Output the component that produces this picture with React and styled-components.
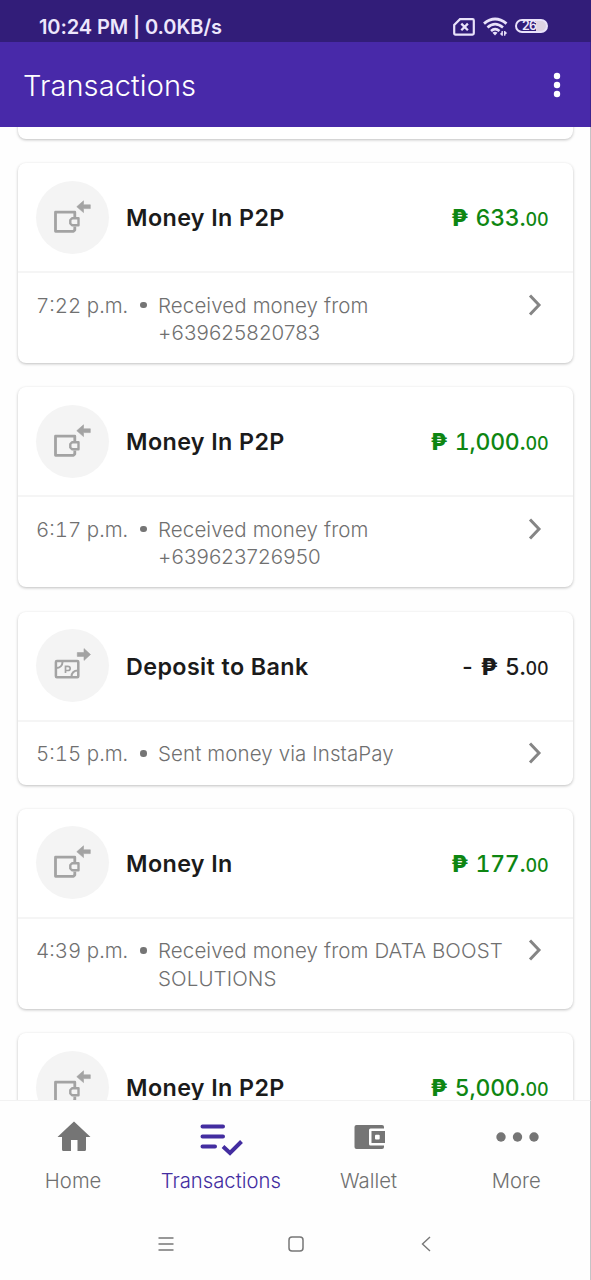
import React from 'react'
import styled, { createGlobalStyle } from 'styled-components'

const transactions = [
    { type: 'wallet', title: 'Money In P2P', whole: '633', time: '7:22 p.m.', details: ['Received money from', '+639625820783'] },
    { type: 'wallet', title: 'Money In P2P', whole: '1,000', time: '6:17 p.m.', details: ['Received money from', '+639623726950'] },
    { type: 'bank', title: 'Deposit to Bank', whole: '5', negative: true, time: '5:15 p.m.', details: ['Sent money via InstaPay'] },
    { type: 'wallet', title: 'Money In', whole: '177', time: '4:39 p.m.', details: ['Received money from DATA BOOST', 'SOLUTIONS'] },
    { type: 'wallet', title: 'Money In P2P', whole: '5,000' },
]

const WalletInIcon = () => (
    <svg width="38" height="34" viewBox="0 0 38 34" fill="none" stroke="#a3a3a3" strokeLinejoin="round">
        <path d="M21.8 17V12.2H2.5V31.3H20.5L21.8 30V26.5" strokeWidth="2.8" />
        <path d="M19 18.3H25.500V25.2H19L17.3 23.5V20Z" strokeWidth="2.4" />
        <path d="M23.8 6.7L30.5 .8V4.8H37.3V8.6H30.5V12.6Z" fill="#a3a3a3" stroke="#a3a3a3" strokeWidth=".6" />
    </svg>
)

const BankOutIcon = () => (
    <svg width="38" height="34" viewBox="0 0 38 34" fill="none" stroke="#a3a3a3">
        <rect x="2.9" y="13.1" width="22.4" height="16.2" rx="1" strokeWidth="2.5" />
        <path d="M3 20C7 20 9.500 17.500 9.500 14M25 22.500C21 22.500 18.500 25 18.500 29" strokeWidth="2" />
        <path d="M12.500 25V18.300H14.700C18 18.300 18 22.500 14.700 22.500H12.500" strokeWidth="1.700" />
        <path d="M37.500 6.500L31 .6V4.600H24.300V8.400H31V12.400Z" fill="#a3a3a3" strokeWidth=".6" strokeLinejoin="round" />
    </svg>
)

const NoSimIcon = () => (
    <svg width="22" height="18" viewBox="0 0 22 18" fill="none" stroke="#e9e2fa">
        <path d="M7 1.200H19.500Q20.800 1.200 20.800 2.500V15.300Q20.800 16.600 19.500 16.600H2.500Q1.200 16.600 1.200 15.300V7Z" strokeWidth="2.200" />
        <path d="M8.300 5.600L14.900 12.200M14.900 5.600L8.300 12.200" strokeWidth="2.300" />
    </svg>
)

const WifiIcon = () => (
    <svg width="25" height="20" viewBox="0 0 25 20" fill="none" stroke="#e9e2fa">
        <path d="M1 6.600Q12 -2.500 23.500 6.600" strokeWidth="2.900" />
        <path d="M4.500 10.500Q12 3.800 20 10.500" strokeWidth="2.700" />
        <path d="M8 14Q12 10.200 16.500 14" strokeWidth="2.500" />
        <path d="M9.500 15.800Q12 13.500 14.500 15.800L12 18.600Z" fill="#e9e2fa" stroke="none" />
        <path d="M19.200 14V18.800M21.700 14V18.800" strokeWidth="1.300" />
        <path d="M16.800 17L19.200 15V18.500ZM24.200 16L21.700 14.300V18Z" fill="#e9e2fa" stroke="none" />
    </svg>
)

const KebabIcon = () => (
    <svg width="8" height="26" viewBox="0 0 8 26" fill="#fff">
        <circle cx="4" cy="4" r="3.200" />
        <circle cx="4" cy="13" r="3.200" />
        <circle cx="4" cy="22" r="3.200" />
    </svg>
)

const ChevronIcon = () => (
    <svg width="14" height="22" viewBox="0 0 14 22" fill="none" stroke="#858585">
        <path d="M2 1.500L11 11L2 20.500" strokeWidth="3" />
    </svg>
)

const HomeIcon = () => (
    <svg width="46" height="34" viewBox="0 0 46 34" fill="#757575">
        <path d="M23 1.500L39.500 17H35V29.500Q35 31 33.500 31H26.500V20H20V31H12.500Q11 31 11 29.500V17H6.500L16 8Z" />
    </svg>
)

const ListCheckIcon = () => (
    <svg width="46" height="34" viewBox="0 0 46 34" fill="none" stroke="#432da0" overflow="visible">
        <path d="M3.500 6.500H24M3.500 16.500H24M3.500 26.500H16" strokeWidth="4" strokeLinecap="round" />
        <path d="M24 26.500L31 33L42.500 21.500" strokeWidth="4" />
    </svg>
)

const WalletIcon = () => (
    <svg width="46" height="34" viewBox="0 0 46 34">
        <path d="M10.500 5H36Q38 5 38 7V27Q38 29 36 29H10.500Q8.500 29 8.500 27V7Q8.500 5 10.500 5Z" fill="#757575" />
        <path d="M40 8.500H24.500Q23 8.500 23 10V24Q23 25.500 24.500 25.500H40Z" fill="#fff" />
        <rect x="25.500" y="11" width="13.500" height="12" fill="#757575" />
        <rect x="29" y="14.700" width="4.700" height="4.700" rx="1" fill="#fff" />
    </svg>
)

const DotsIcon = () => (
    <svg width="46" height="34" viewBox="0 0 46 34" fill="#757575">
        <circle cx="7" cy="17" r="4.700" />
        <circle cx="23.500" cy="17" r="4.700" />
        <circle cx="40" cy="17" r="4.700" />
    </svg>
)

const tabs = [
    { label: 'Home', icon: <HomeIcon /> },
    { label: 'Transactions', icon: <ListCheckIcon />, active: true },
    { label: 'Wallet', icon: <WalletIcon /> },
    { label: 'More', icon: <DotsIcon /> },
]

const TransactionItem = ({ item }) => (
    <Card>
        <CardTop>
            <IconCircle>{item.type === 'bank' ? <BankOutIcon /> : <WalletInIcon />}</IconCircle>
            <CardTitle>{item.title}</CardTitle>
            <Amount $negative={item.negative}>
                {item.negative && <Minus>-</Minus>}
                <Peso>₱</Peso>
                <span>{item.whole}.</span>
                <Cents>00</Cents>
            </Amount>
        </CardTop>
        {item.details && (
            <CardBottom>
                <Time>{item.time}</Time>
                <Bullet />
                <Details>
                    {item.details.map((line) => <div key={line}>{line}</div>)}
                </Details>
                <ChevronIcon />
            </CardBottom>
        )}
    </Card>
)

const App = () => {
    return (
        <Screen>
            <GlobalStyle />
            <StatusBar>
                <Clock>10:24 PM | 0.0KB/s</Clock>
                <StatusIcons>
                    <NoSimIcon />
                    <WifiIcon />
                    <Battery><span>26</span></Battery>
                </StatusIcons>
            </StatusBar>
            <AppBar>
                <PageTitle>Transactions</PageTitle>
                <KebabIcon />
            </AppBar>
            <List>
                <PreviousCard />
                {transactions.map((item, i) => <TransactionItem key={i} item={item} />)}
            </List>
            <TabBar>
                {tabs.map((tab) => (
                    <Tab key={tab.label} $active={tab.active}>
                        {tab.icon}
                        <span>{tab.label}</span>
                    </Tab>
                ))}
            </TabBar>
            <SystemNav>
                <svg width="16" height="16" viewBox="0 0 16 16" stroke="#777" strokeWidth="1.400">
                    <path d="M.5 2H15.500M.5 8H15.500M.5 14H15.500" />
                </svg>
                <svg width="16" height="16" viewBox="0 0 16 16" fill="none" stroke="#777" strokeWidth="1.500">
                    <rect x="1" y="1" width="14" height="14" rx="3" />
                </svg>
                <svg width="16" height="16" viewBox="0 0 16 16" fill="none" stroke="#777" strokeWidth="1.400">
                    <path d="M12 1L4.500 8L12 15" />
                </svg>
            </SystemNav>
        </Screen>
    )
}

const GlobalStyle = createGlobalStyle`
    * {
        box-sizing: border-box;
    }

    body {
        margin: 0;
        background: #fff;
        font-family: Inter, 'Noto Sans', sans-serif;
    }

    svg {
        display: block;
        flex-shrink: 0;
    }
`

const Screen = styled.div`
    width: 591px;
    height: 1280px;
    display: flex;
    flex-direction: column;
    overflow: hidden;
    background: #fefefe;
`

const StatusBar = styled.header`
    height: 42px;
    flex-shrink: 0;
    display: flex;
    justify-content: space-between;
    padding: 15px 43px 0 39px;
    background: #321d79;
    color: #ede7fc;
`

const Clock = styled.div`
    font-size: 20px;
    line-height: 24px;
    font-weight: 600;
    letter-spacing: -0.1px;
    white-space: nowrap;
`

const StatusIcons = styled.div`
    height: 24px;
    display: flex;
    align-items: center;
    gap: 7.5px;
`

const Battery = styled.div`
    width: 33px;
    height: 14px;
    margin-top: -2px;
    border: 2px solid #e9e2fa;
    border-radius: 7px;
    background: linear-gradient(to right, transparent 66%, #ddd3e2 66%);
    display: flex;
    align-items: center;
    padding-left: 5px;
    font-size: 12.5px;
    line-height: 12px;
    font-weight: 600;
    letter-spacing: -0.7px;
`

const AppBar = styled.div`
    height: 85px;
    flex-shrink: 0;
    display: flex;
    align-items: center;
    justify-content: space-between;
    padding: 1px 29px 0 23px;
    background: #4829a9;
    border-right: 1px solid #3c228e;
`

const PageTitle = styled.h1`
    margin: 0;
    padding-top: 1px;
    color: #fff;
    font-size: 29px;
    font-weight: 300;
    letter-spacing: 0.1px;
`

const List = styled.main`
    flex: 1;
    min-height: 0;
    overflow: hidden;
    display: flex;
    flex-direction: column;
    gap: 24.4px;
    padding: 0 17px 0 18px;
    border-right: 1px solid #c4c4c6;
`

const Card = styled.section`
    flex-shrink: 0;
    border-radius: 8px;
    background: #fff;
    box-shadow: 0 1px 3px rgba(0, 0, 0, 0.25);
`

const PreviousCard = styled(Card)`
    height: 30px;
    margin-top: -18.4px;
`

const CardTop = styled.div`
    height: 110px;
    display: flex;
    align-items: center;
    padding: 0 24.5px 0 18px;
    border-bottom: 2px solid #f5f5f5;
`

const IconCircle = styled.div`
    width: 73px;
    height: 73px;
    flex-shrink: 0;
    border-radius: 50%;
    background: #f4f4f4;
    padding: 19px 0 0 17px;
`

const CardTitle = styled.h2`
    flex: 1;
    margin: 1px 0 0 17px;
    color: #1b1b1b;
    font-size: 23.3px;
    font-weight: 600;
    letter-spacing: 0.4px;
    white-space: nowrap;
`

const Amount = styled.div`
    display: flex;
    align-items: baseline;
    margin-top: 2px;
    color: ${({ $negative }) => ($negative ? '#1b1b1b' : '#0e8612')};
    font-size: 23px;
    font-weight: 450;
    font-variant-numeric: tabular-nums;
    letter-spacing: -0.2px;
`

const Minus = styled.span`
    margin-right: 6px;
`

const Peso = styled.span`
    margin-right: 7.5px;
    font-weight: 800;
`

const Cents = styled.span`
    font-size: 18px;
`

const CardBottom = styled.div`
    display: flex;
    align-items: flex-start;
    padding: 18.5px 31px 17.1px 18px;
    color: #707070;
    font-size: 20.5px;
    line-height: 27.2px;
    font-weight: 300;

    > svg {
        margin-top: 2px;
    }
`

const Time = styled.div`
    width: 104px;
    white-space: nowrap;
    font-variant-numeric: tabular-nums;
`

const Bullet = styled.i`
    width: 6.5px;
    height: 6.5px;
    margin: 10px 11.5px 0 0;
    border-radius: 50%;
    background: #757575;
`

const Details = styled.div`
    flex: 1;
    white-space: nowrap;
    letter-spacing: 0.1px;
`

const TabBar = styled.nav`
    height: 108px;
    flex-shrink: 0;
    display: grid;
    grid-template-columns: repeat(4, 147.7px);
    padding-top: 19px;
    background: #fefefe;
    border-top: 1px solid #f2f2f2;
    border-right: 1px solid #c4c4c6;
`

const Tab = styled.div`
    display: flex;
    flex-direction: column;
    align-items: center;
    gap: 13px;
    margin-left: -1.5px;
    color: ${({ $active }) => ($active ? '#432da0' : '#707070')};
    font-size: 20.3px;
    line-height: 27px;
    font-weight: 300;

    > svg {
        margin-left: 2px;
    }
`

const SystemNav = styled.div`
    height: 72px;
    flex-shrink: 0;
    display: flex;
    justify-content: center;
    gap: 114px;
    padding: 28px 0 0 2px;
    border-right: 1px solid #c4c4c6;
`

export default App
